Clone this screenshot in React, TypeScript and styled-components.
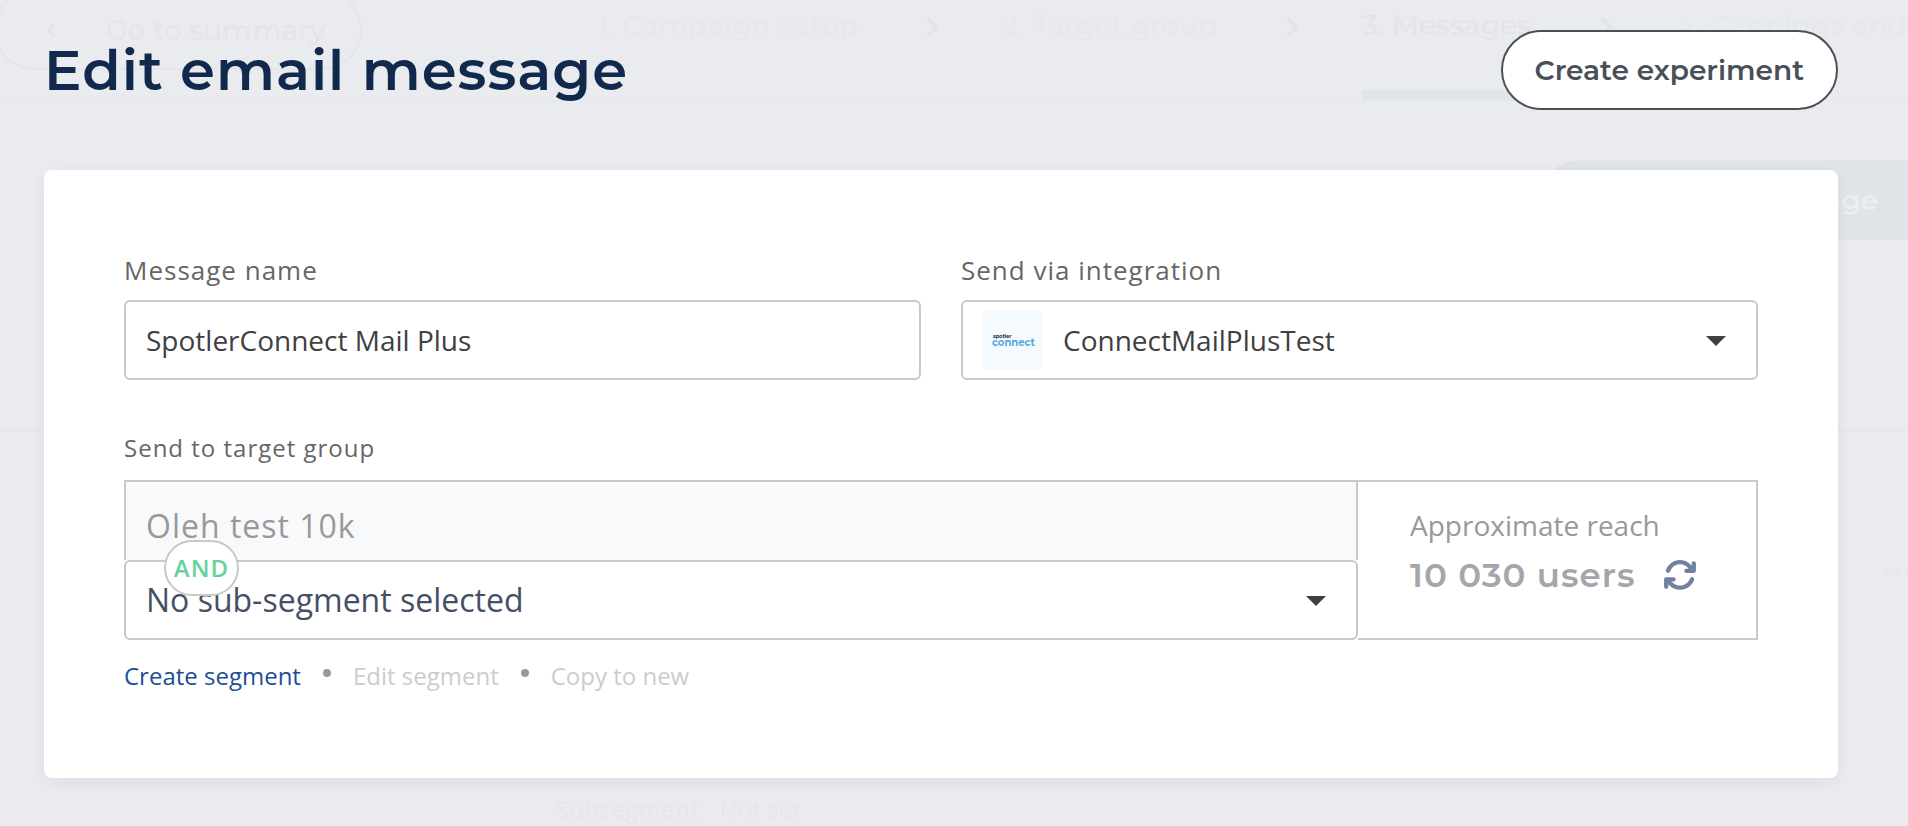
import React from "react";
import styled, { createGlobalStyle } from "styled-components";
import { FaArrowsRotate } from "react-icons/fa6";

const GlobalStyle = createGlobalStyle`
  *, *::before, *::after { box-sizing: border-box; }
  body {
    margin: 0;
    background: #eaebef;
    font-family: "Open Sans", "Noto Sans", sans-serif;
    color: #404042;
  }
`;

const heading = `"Montserrat", Inter, "Open Sans", sans-serif`;

const Page = styled.div`
  position: relative;
  min-height: 100vh;
  overflow: hidden;
  background: #eaebef;
`;

/* Faded campaign page behind the dialog */
const Underlay = styled.div`
  position: absolute;
  inset: 0;
  overflow: hidden;
  font-family: ${heading};
  font-size: 28px;
  line-height: 40px;
  color: #e4e5e9;
`;

const TopBar = styled.div`
  display: flex;
  height: 102px;
  border-bottom: 2px solid #e8e9ed;
`;

const BackPill = styled.div`
  display: flex;
  align-items: center;
  gap: 50px;
  flex: none;
  width: 368px;
  height: 80px;
  margin: -10px 236px 0 -6px;
  padding-left: 50px;
  border: 2px solid #e4e5e9;
  border-radius: 40px;
  font-weight: 500;
`;

const Steps = styled.div`
  display: grid;
  grid-template-columns: 404px 360px 314px auto;
  flex: none;
`;

const Step = styled.div<{ $active?: boolean }>`
  display: flex;
  justify-content: space-between;
  align-items: flex-start;
  padding: 5px 62px 0 0;
  font-weight: 500;
  white-space: nowrap;
  color: ${(p) => (p.$active ? "#e2e4e8" : "#e7e8ec")};
  svg {
    margin-top: 12px;
    color: #e3e4e8;
  }
`;

const ActiveStep = styled(Step)`
  background: linear-gradient(#e0e4e9, #e0e4e9) left 90px / 172px 10px no-repeat;
`;

const AddPill = styled.div`
  width: 400px;
  height: 80px;
  margin: 58px -32px 0 auto;
  padding: 20px 62px 20px 0;
  border-radius: 40px;
  background: #e0e4e9;
  color: #ecedf1;
  font-weight: 600;
  text-align: right;
`;

const Divider = styled.div`
  height: 2px;
  margin-top: 190px;
  background: #e6e7eb;
`;

const MoreDots = styled.div`
  display: flex;
  justify-content: flex-end;
  gap: 6px;
  margin: 137px -2px 0 0;
  span {
    width: 5px;
    height: 5px;
    border-radius: 50%;
    background: #e6e7eb;
  }
`;

const Meta = styled.div`
  display: flex;
  gap: 20px;
  margin: 215px 0 0 556px;
  font: 24px/40px "Open Sans", sans-serif;
  color: #e6e7eb;
  b {
    font-weight: 600;
  }
`;

const Dialog = styled.main`
  position: relative;
  padding: 30px 70px 48px 44px;
`;

const Header = styled.header`
  display: flex;
  align-items: center;
  justify-content: space-between;
  height: 80px;
  margin-bottom: 60px;
`;

const Title = styled.h1`
  margin: 0;
  font: 600 56px/80px ${heading};
  letter-spacing: 1px;
  color: #10294d;
`;

const OutlineButton = styled.button`
  height: 80px;
  padding: 0 32px;
  border: 2px solid #495057;
  border-radius: 40px;
  background: #fff;
  color: #495057;
  font: 600 28px/40px ${heading};
`;

const Card = styled.form`
  padding: 80px;
  border-radius: 8px;
  background: #fff;
  box-shadow: 0 4px 16px rgba(40, 40, 60, 0.06);
`;

const Columns = styled.div`
  display: grid;
  grid-template-columns: 1fr 1fr;
  gap: 40px;
  margin-bottom: 48px;
`;

const Label = styled.label<{ $small?: boolean }>`
  display: block;
  margin-bottom: ${(p) => (p.$small ? 12 : 10)}px;
  font-size: ${(p) => (p.$small ? 24 : 26)}px;
  line-height: 40px;
  letter-spacing: 1px;
  color: #666;
`;

const TextInput = styled.input`
  display: block;
  width: 100%;
  height: 80px;
  padding: 0 20px;
  border: 2px solid #c9c9c9;
  border-radius: 6px;
  background: #fff;
  color: #404042;
  font: 28px/40px "Open Sans", sans-serif;
`;

const LockedInput = styled(TextInput)`
  padding-top: 8px;
  border-bottom: 0;
  border-radius: 0;
  background: #f8f9fb;
  color: #999;
  font-size: 32px;
  letter-spacing: 1px;
`;

const SelectBox = styled.div`
  display: flex;
  align-items: center;
  height: 80px;
  padding: 0 30px 0 20px;
  border: 2px solid #c9c9c9;
  border-radius: 6px;
  background: #fff;
`;

const Select = styled.select<{ $large?: boolean }>`
  flex: 1;
  min-width: 0;
  height: 76px;
  padding: 0;
  border: 0;
  appearance: none;
  background: transparent;
  color: ${(p) => (p.$large ? "#454f66" : "#404042")};
  font: ${(p) => (p.$large ? 32 : 28)}px/44px "Open Sans", sans-serif;
`;

const CaretIcon = styled.svg`
  flex: none;
  width: 20px;
  height: 10px;
  margin-top: 2px;
  fill: #404042;
`;

const LogoTile = styled.svg`
  flex: none;
  width: 60px;
  height: 60px;
  margin-right: 20px;
  border-radius: 6px;
  background: #f5faff;
  font-family: ${heading};
  font-weight: 700;
`;

const Group = styled.div`
  display: grid;
  grid-template-columns: 1fr 400px;
`;

const Segments = styled.div`
  position: relative;
`;

const AndBadge = styled.span`
  position: absolute;
  top: 60px;
  left: 40px;
  width: 75px;
  height: 56px;
  border: 2px solid #c9c9c9;
  border-radius: 28px;
  background: #fff;
  color: #66d29a;
  font-size: 24px;
  font-weight: 600;
  line-height: 52px;
  letter-spacing: 1px;
  text-align: center;
`;

const Reach = styled.div`
  display: flex;
  flex-direction: column;
  justify-content: center;
  padding: 0 0 20px 52px;
  border: 2px solid #c9c9c9;
  border-left: 0;
  color: #999;
  font-size: 28px;
  line-height: 50px;
`;

const ReachValue = styled.div`
  display: flex;
  align-items: center;
  gap: 28px;
  font: 600 34px/50px ${heading};
  letter-spacing: 1px;
  color: #a5a6ac;
`;

const IconButton = styled.button`
  display: flex;
  padding: 0;
  border: 0;
  background: none;
  color: #7181a2;
`;

const Links = styled.nav`
  display: flex;
  align-items: center;
  gap: 22px;
  margin: 16px 0 2px;
  font-size: 24px;
  line-height: 40px;
`;

const SegmentLink = styled.a<{ $off?: boolean }>`
  color: ${(p) => (p.$off ? "#ccc" : "#1c4e94")};
  text-decoration: none;
`;

const Dot = styled.span`
  width: 8px;
  height: 8px;
  margin-bottom: 6px;
  border-radius: 50%;
  background: #999;
`;

const Caret = () => (
  <CaretIcon viewBox="0 0 20 10" aria-hidden="true">
    <path d="M0 0h20L10 10z" />
  </CaretIcon>
);

const StepArrow = () => (
  <svg width="14" height="20" viewBox="0 0 14 20" aria-hidden="true">
    <path d="M3 2.500l7.500 7.500L3 17.500" fill="none" stroke="currentColor" strokeWidth="4.500" strokeLinecap="round" />
  </svg>
);

export default function App() {
  return (
    <Page>
      <GlobalStyle />
      <Underlay aria-hidden="true">
        <TopBar>
          <BackPill>
            <svg width="10" height="16" viewBox="0 0 10 16">
              <path d="M8 2L2.500 8L8 14" fill="none" stroke="currentColor" strokeWidth="3" strokeLinecap="round" />
            </svg>
            Go to summary
          </BackPill>
          <Steps>
            <Step>1. Campaign setup<StepArrow /></Step>
            <Step>2. Target group<StepArrow /></Step>
            <ActiveStep $active>3. Messages<StepArrow /></ActiveStep>
            <Step>4. Cappings and</Step>
          </Steps>
        </TopBar>
        <AddPill>Add message</AddPill>
        <Divider />
        <MoreDots><span /><span /><span /></MoreDots>
        <Meta><b>Subsegment</b>Not set</Meta>
      </Underlay>

      <Dialog>
        <Header>
          <Title>Edit email message</Title>
          <OutlineButton type="button">Create experiment</OutlineButton>
        </Header>
        <Card>
          <Columns>
            <div>
              <Label htmlFor="name">Message name</Label>
              <TextInput id="name" defaultValue="SpotlerConnect Mail Plus" />
            </div>
            <div>
              <Label htmlFor="integration">Send via integration</Label>
              <SelectBox>
                <LogoTile viewBox="0 0 60 60" aria-hidden="true">
                  <text x="10" y="28" fontSize="5" fill="#10294d">spotler</text>
                  <text x="9" y="36" fontSize="10" fill="#55a9de">connect</text>
                </LogoTile>
                <Select id="integration">
                  <option>ConnectMailPlusTest</option>
                </Select>
                <Caret />
              </SelectBox>
            </div>
          </Columns>
          <Label $small htmlFor="group">Send to target group</Label>
          <Group>
            <Segments>
              <LockedInput id="group" disabled defaultValue="Oleh test 10k" />
              <SelectBox>
                <Select $large aria-label="Sub-segment">
                  <option>No sub-segment selected</option>
                </Select>
                <Caret />
              </SelectBox>
              <AndBadge>AND</AndBadge>
            </Segments>
            <Reach>
              Approximate reach
              <ReachValue>
                10 030 users
                <IconButton type="button" aria-label="Refresh reach">
                  <FaArrowsRotate size={34} />
                </IconButton>
              </ReachValue>
            </Reach>
          </Group>
          <Links>
            <SegmentLink href="#create">Create segment</SegmentLink>
            <Dot />
            <SegmentLink $off href="#edit">Edit segment</SegmentLink>
            <Dot />
            <SegmentLink $off href="#copy">Copy to new</SegmentLink>
          </Links>
        </Card>
      </Dialog>
    </Page>
  );
}
